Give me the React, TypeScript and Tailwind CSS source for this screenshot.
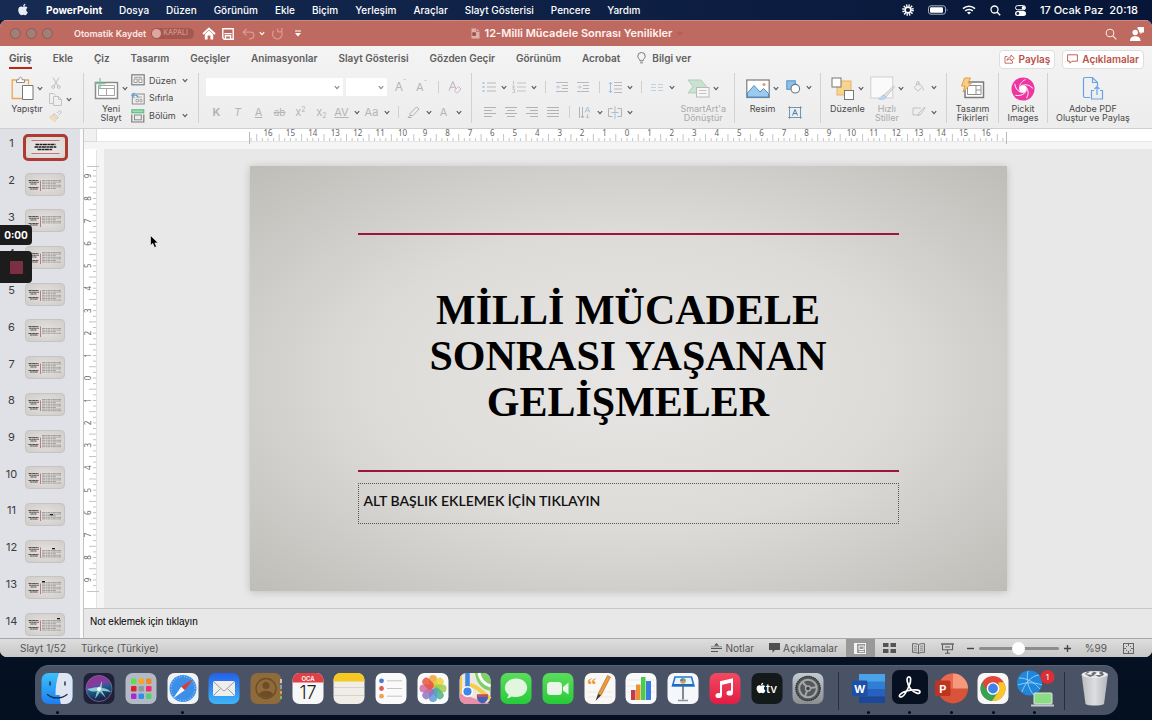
import type { ReactNode } from "react";
import { FaApple } from "react-icons/fa";

const MENUS = ["Dosya", "Düzen", "Görünüm", "Ekle", "Biçim", "Yerleşim", "Araçlar", "Slayt Gösterisi", "Pencere", "Yardım"];
const TABS = ["Giriş", "Ekle", "Çiz", "Tasarım", "Geçişler", "Animasyonlar", "Slayt Gösterisi", "Gözden Geçir", "Görünüm", "Acrobat"];

/* ---------- small helpers ---------- */

function Ico({ w, h, children }: { w: number; h: number; children: ReactNode }) {
  return (
    <svg width={w} height={h} viewBox={`0 0 ${w} ${h}`} fill="none" className="shrink-0" aria-hidden="true">
      {children}
    </svg>
  );
}

function Chevron({ color = "#5a5a5a" }: { color?: string }) {
  return (
    <Ico w={6} h={5}>
      <path d="M.8 1.2 3 3.6 5.2 1.2" stroke={color} strokeWidth="1.2" />
    </Ico>
  );
}

// icon only, 21px slot
function Tool({ label, children }: { label: string; children: ReactNode }) {
  return (
    <button aria-label={label} className="flex h-5 w-[21px] shrink-0 items-center justify-center text-[#b5b5b5]">
      {children}
    </button>
  );
}

// icon with a drop-down arrow
function MenuTool({ label, children }: { label: string; children: ReactNode }) {
  return (
    <button aria-label={label} className="flex h-5 w-[30px] shrink-0 items-center text-[#b5b5b5]">
      <span className="flex w-[19px] justify-center">{children}</span>
      <span className="flex w-[11px] justify-center">
        <Chevron />
      </span>
    </button>
  );
}

function Divider() {
  return (
    <span className="flex w-3 shrink-0 justify-center">
      <span className="h-3 w-px bg-[#cfcfcf]" />
    </span>
  );
}

// tall ribbon button: picture on top, one or two caption lines below
function BigTool({ lines, icon, chevron, dim }: { lines: string[]; icon: ReactNode; chevron?: boolean; dim?: boolean }) {
  return (
    <button className="flex shrink-0 flex-col items-center">
      <span className="flex h-[31px] items-center gap-[3px]">
        {icon}
        {chevron && <Chevron />}
      </span>
      <span className={dim ? "text-center text-[9px] leading-[9px] text-[#a9a9a9]" : "text-center text-[9px] leading-[9px] text-[#4a4a4a]"}>
        {lines.map((l) => (
          <span key={l} className="block whitespace-nowrap">{l}</span>
        ))}
      </span>
    </button>
  );
}

/* ---------- menu bar ---------- */

function MenuBar() {
  return (
    <header className="flex h-5 shrink-0 items-center bg-linear-to-r from-[#162a52] to-[#071638] pr-[14px] pl-[18px] text-[10px] font-medium text-white">
      <button aria-label="Apple" className="mr-[18px]">
        <FaApple size={13} color="#e8ecf5" className="mx-auto -mt-px w-[10px]" />
      </button>
      <nav className="flex gap-[17px] whitespace-nowrap">
        <button className="font-bold">PowerPoint</button>
        {MENUS.map((m) => (
          <button key={m}>{m}</button>
        ))}
      </nav>
      <div className="ml-auto flex items-center gap-[14px]">
        <Ico w={12} h={12}>
          <circle cx="6" cy="6" r="4.6" stroke="#fff" strokeWidth="2.4" strokeDasharray="1.3 1.1" />
          <circle cx="6" cy="6" r="2.9" stroke="#fff" strokeWidth="1.6" />
        </Ico>
        <Ico w={20} h={10}>
          <rect x=".5" y=".8" width="17" height="8.4" rx="2.4" stroke="#aab3c8" />
          <rect x="2" y="2.2" width="13" height="5.6" rx="1.2" fill="#fff" />
          <path d="M18.8 3.6v2.8c.8-.3.8-2.500 0-2.800Z" fill="#aab3c8" />
        </Ico>
        <Ico w={14} h={10}>
          <path d="M1 3.600a8.600 8.600 0 0 1 12 0M3.200 5.900a5.500 5.500 0 0 1 7.600 0" stroke="#fff" strokeWidth="1.500" />
          <path d="m7 9.600-2-2a2.900 2.900 0 0 1 4 0Z" fill="#fff" />
        </Ico>
        <Ico w={11} h={11}>
          <circle cx="4.500" cy="4.500" r="3.500" stroke="#fff" strokeWidth="1.300" />
          <path d="m7 7 3.200 3.200" stroke="#fff" strokeWidth="1.400" />
        </Ico>
        <Ico w={11} h={11}>
          <rect x=".5" y=".6" width="10" height="4.200" rx="2.100" stroke="#fff" />
          <circle cx="8.400" cy="2.700" r="1.700" fill="#fff" />
          <rect x="0" y="6" width="11" height="5" rx="2.500" fill="#fff" />
          <circle cx="2.800" cy="8.500" r="1.400" fill="#14244a" />
        </Ico>
        <span className="flex gap-[6px] text-[11px] whitespace-nowrap">
          <span>17 Ocak Paz</span>
          <span>20:18</span>
        </span>
      </div>
    </header>
  );
}

/* ---------- window title ---------- */

function TitleBar() {
  return (
    <div className="flex h-[26px] shrink-0 items-center border-t border-[#c98a82] bg-[#bf6a60] pr-2 pl-[10px] text-white">
      <div className="flex flex-1 items-center">
        <div className="flex gap-[5px]">
          {["Kapat", "Küçült", "Büyüt"].map((n) => (
            <button key={n} aria-label={n} className="size-[11px] rounded-full border border-[#8f5a53] bg-[#a17f79]" />
          ))}
        </div>
        <label className="ml-[21px] flex items-center gap-[5px] text-[9px] font-semibold whitespace-nowrap text-[#fbe9e6]">
          Otomatik Kaydet
          <span className="relative flex h-[11px] w-[43px] items-center rounded-full bg-[#a4574e] pl-3 text-[7px] font-medium text-[#d29a93]">
            <input type="checkbox" className="absolute top-px left-px size-[9px] appearance-none rounded-full bg-[#dca7a0]" />
            KAPALI
          </span>
        </label>
        <div className="ml-2 flex items-center gap-[6px]">
          <button aria-label="Giriş sayfası">
            <Ico w={14} h={13}>
              <path d="M1 7 7 1.500 13 7" stroke="#fff" strokeWidth="1.700" />
              <path d="M2.800 7.200 7 3.600l4.200 3.600V12.500H8.400V8.600H5.600v3.900H2.800Z" fill="#fff" />
            </Ico>
          </button>
          <button aria-label="Kaydet">
            <Ico w={12} h={12}>
              <path d="M.8.8h10.400v10.400H2.200L.8 9.800Z" stroke="#fff" strokeWidth="1.400" />
              <path d="M2.400 5.600h7.200M3.400 11V7.800h5.200V11" stroke="#fff" strokeWidth="1.400" />
            </Ico>
          </button>
          <button aria-label="Geri al" className="ml-[2px] flex items-center gap-1">
            <Ico w={13} h={12}>
              <path d="M4.600 1 1.200 4.200l3.400 3.200M1.400 4.200h7.200a3.300 3.300 0 0 1 0 6.600H7" stroke="#d99a92" strokeWidth="1.300" />
            </Ico>
            <Chevron color="#fff" />
          </button>
          <button aria-label="Yinele">
            <Ico w={13} h={12}>
              <path d="M2.800 2.800a4.800 4.800 0 1 0 7.400.4M6.600 3.800V.8M6.600 3.800h4.200V0" stroke="#d99a92" strokeWidth="1.300" />
            </Ico>
          </button>
          <button aria-label="Araç çubuğunu özelleştir" className="ml-1">
            <Ico w={8} h={7}>
              <path d="M1 1h6" stroke="#fff" strokeWidth="1.200" />
              <path d="M1 3h6L4 6.400Z" fill="#fff" />
            </Ico>
          </button>
        </div>
      </div>
      <div className="flex items-center gap-[5px] text-[11px] font-semibold whitespace-nowrap text-[#fff3f1]">
        <Ico w={9} h={11}>
          <path d="M.5.5h5.200L8.500 3.300V10.500H.5Z" fill="#d9b0aa" />
          <path d="M5.500.5v3h3" stroke="#a9655d" strokeWidth=".7" />
          <rect x="1.300" y="4.300" width="3.600" height="3.600" fill="#a34c42" />
        </Ico>
        <h1>12-Milli Mücadele Sonrası Yenilikler</h1>
        <Chevron color="#b0584e" />
      </div>
      <div className="flex flex-1 items-center justify-end gap-[13px]">
        <button aria-label="Ara">
          <Ico w={12} h={12}>
            <circle cx="5" cy="5" r="3.800" stroke="#fbe5e2" strokeWidth="1.100" />
            <path d="m7.800 7.800 3.500 3.500" stroke="#fbe5e2" strokeWidth="1.200" />
          </Ico>
        </button>
        <button aria-label="Hesap">
          <Ico w={14} h={14}>
            <path d="M7.500 0h6.500v5.500h-2L10.500 7.500V5.500H9.300A3.500 3.500 0 0 0 7.500 2Z" fill="#fff" />
            <circle cx="5.200" cy="5.500" r="2.700" fill="#fff" />
            <path d="M0 14c0-3.500 2.200-4.700 5.200-4.700s5.300 1.200 5.300 4.700Z" fill="#fff" />
          </Ico>
        </button>
      </div>
    </div>
  );
}

/* ---------- ribbon ---------- */

function TabRow() {
  return (
    <div className="flex h-[24px] shrink-0 items-center pr-2 pl-[9px] text-[10px] font-semibold text-[#606060]">
      <div className="flex gap-[21px] whitespace-nowrap">
        {TABS.map((t, i) => (
          <button key={t} className={i === 0 ? "border-b-2 border-[#b5271b] pt-[2px] leading-[18px] font-bold" : "leading-[18px]"}>
            {t}
          </button>
        ))}
        <button className="-ml-1 flex items-center gap-[6px]">
          <Ico w={9} h={12}>
            <path d="M3 8.800C3 7 .8 6.400.8 4.200a3.700 3.700 0 0 1 7.400 0C8.200 6.400 6 7 6 8.800ZM3.200 10.800h2.600" stroke="#6a6a6a" strokeWidth=".9" />
          </Ico>
          Bilgi ver
        </button>
      </div>
      <div className="mt-[2px] ml-auto flex gap-[7px] font-semibold text-[#bb5147]">
        <button className="flex h-[19px] items-center gap-1 rounded-sm border border-[#e0dedd] bg-white px-1">
          <Ico w={11} h={10}>
            <path d="M3.500 2.500H1v6.700h7.500V7M3 6.500c.4-2.300 1.900-3.500 4-3.500V1l3.300 3L7 7V5C5.200 5 4 5.300 3 6.500Z" stroke="#bb5147" strokeWidth=".8" />
          </Ico>
          Paylaş
        </button>
        <button className="flex h-[19px] items-center gap-1 rounded-sm border border-[#e0dedd] bg-white px-1">
          <Ico w={11} h={10}>
            <path d="M.6.800h9.800v6.400H5L3 9.300V7.200H.6Z" stroke="#bb5147" strokeWidth=".9" />
          </Ico>
          Açıklamalar
        </button>
      </div>
    </div>
  );
}

function ClipboardGroup() {
  return (
    <>
      <BigTool
        lines={["Yapıştır"]}
        chevron
        icon={
          <Ico w={23} h={26}>
            <path d="M5.500 4H1.200v18.500H11" stroke="#e9a850" strokeWidth="1.300" />
            <path d="M13 4h4.500v4.500" stroke="#e9a850" strokeWidth="1.300" />
            <path d="M5.500 3.800h2.200c.4-3.400 3-3.400 3.500 0h2.300v2.700h-8Z" fill="#fff" stroke="#8b8b8b" />
            <path d="M11.500 9.500H22v14H11.500Z" fill="#fff" stroke="#777" />
          </Ico>
        }
      />
      <div className="flex flex-col">
        <Tool label="Kes">
          <Ico w={10} h={12}>
            <path d="M2 .5 7 9M8 .5 3 9" stroke="#bdbdbd" />
            <circle cx="2.200" cy="10" r="1.400" stroke="#bdbdbd" />
            <circle cx="7.800" cy="10" r="1.400" stroke="#bdbdbd" />
          </Ico>
        </Tool>
        <button aria-label="Kopyala" className="flex h-4 items-center gap-1 pl-1">
          <Ico w={13} h={13}>
            <path d="M4.500 10.500H.5V.5h4.200l2 2" stroke="#c3c3c3" />
            <path d="M4.500 3.500h5l3 3v6h-8ZM9.500 3.500v3h3" stroke="#c3c3c3" />
          </Ico>
          <Chevron />
        </button>
        <Tool label="Biçim boyacısı">
          <Ico w={13} h={12}>
            <path d="m8 3 3-2.500 1.500 1.500L10 5" stroke="#c4c4c4" />
            <path d="m5 3.500 4.500 4-1.500 1-4-3.500Z" stroke="#c4c4c4" />
            <path d="M4 5 .8 6.500C2 9 4 11 6 11.500L7.800 8.500Z" fill="#f5dcbd" stroke="#e5cfb4" strokeWidth=".8" />
          </Ico>
        </Tool>
      </div>
    </>
  );
}

function SlidesGroup() {
  return (
    <>
      <BigTool
        lines={["Yeni", "Slayt"]}
        chevron
        icon={
          <Ico w={25} h={24}>
            <rect x="1.500" y="5.500" width="22" height="16" fill="#fff" stroke="#8a8a8a" strokeWidth="1.500" />
            <path d="M4.500 8.500h16v10h-16ZM4.500 11.500h16M12.500 11.500v7" stroke="#a5a5a5" />
            <path d="M6 1v11M.5 6.500h11" stroke="#7cc6a2" strokeWidth="1.300" />
          </Ico>
        }
      />
      <div className="flex flex-col gap-[3px] text-[9px] text-[#4a4a4a]">
        <button className="flex h-[15px] items-center gap-1">
          <Ico w={14} h={12}>
            <rect x=".8" y=".8" width="12.400" height="10" stroke="#7d7d7d" strokeWidth="1.200" />
            <path d="M3 3.300h8M3 5h3.200v3.500H3ZM7.800 5H11v3.500H7.800Z" stroke="#8d8d8d" strokeWidth=".8" />
          </Ico>
          <span className="w-[29px] text-left">Düzen</span>
          <Chevron />
        </button>
        <button className="flex h-[15px] items-center gap-1">
          <Ico w={14} h={13}>
            <rect x="1.300" y="2" width="11.900" height="10" stroke="#8b8b8b" />
            <path d="M5 5h6M5 7.300h2.500v2.500H5ZM9 7.300h2v2.500H9Z" stroke="#9a9a9a" strokeWidth=".8" />
            <path d="M3.600.8.9 3.300l2.700 2.500M1 3.300h4c1.500 0 2 1 2 2.200" stroke="#5c9bd0" strokeWidth="1.100" />
          </Ico>
          Sıfırla
        </button>
        <button className="flex h-[15px] items-center gap-1">
          <Ico w={14} h={14}>
            <rect x=".8" y=".8" width="12" height="3" fill="#9fdcb3" stroke="#53b878" />
            <path d="M.8 5.500v7.500h12V5.500" stroke="#7a7a7a" strokeWidth="1.200" />
            <rect x="3.500" y="6" width="6.800" height="4.800" stroke="#8a8a8a" />
          </Ico>
          <span className="w-[29px] text-left">Bölüm</span>
          <Chevron />
        </button>
      </div>
    </>
  );
}

function FontGroup() {
  return (
    <div className="flex flex-col gap-[5px] pt-1">
      <div className="flex h-5 items-center">
        <div className="relative">
          <select aria-label="Yazı tipi" className="block h-[18px] w-[137px] appearance-none bg-white" />
          <span className="pointer-events-none absolute top-[7px] right-[3px]">
            <Chevron color="#8a8a8a" />
          </span>
        </div>
        <div className="relative ml-[3px]">
          <select aria-label="Yazı tipi boyutu" className="block h-[18px] w-[41px] appearance-none bg-white" />
          <span className="pointer-events-none absolute top-[7px] right-[3px]">
            <Chevron color="#8a8a8a" />
          </span>
        </div>
        <span className="w-[3px]" />
        <Tool label="Büyüt">
          <span className="flex text-[12px]">
            A<span className="text-[8px] leading-[8px]">ˆ</span>
          </span>
        </Tool>
        <Tool label="Küçült">
          <span className="flex text-[11px]">
            A<span className="text-[8px] leading-[8px]">ˇ</span>
          </span>
        </Tool>
        <Divider />
        <Tool label="Biçimlendirmeyi temizle">
          <Ico w={14} h={14}>
            <path d="M1 10.500 4.800 1.500 8 9M2.500 7.300h4" stroke="#b5b5b5" />
            <path d="m6.500 10.500 4-4 2.500 2.500-3.500 3.800H8.300Z" stroke="#d7abd5" />
          </Ico>
        </Tool>
      </div>
      <div className="flex h-5 items-center text-[11px]">
        <Tool label="Kalın"><b>K</b></Tool>
        <Tool label="İtalik"><i>T</i></Tool>
        <Tool label="Altı çizili"><u>A</u></Tool>
        <Tool label="Üstü çizili"><s className="text-[10px]">ab</s></Tool>
        <Tool label="Üst simge"><span>x<sup className="text-[7px]">2</sup></span></Tool>
        <Tool label="Alt simge"><span>x<sub className="text-[7px]">2</sub></span></Tool>
        <MenuTool label="Karakter aralığı"><u className="decoration-1">AV</u></MenuTool>
        <MenuTool label="Büyük küçük harf">Aa</MenuTool>
        <Divider />
        <MenuTool label="Vurgu rengi">
          <Ico w={13} h={12}>
            <path d="M3 7.500 9.500 1l2.500 2-6 6.500H3ZM3 9.500 1 11.500h3.500" stroke="#b0b0b0" />
          </Ico>
        </MenuTool>
        <MenuTool label="Yazı rengi">A</MenuTool>
      </div>
    </div>
  );
}

// rows of text strokes, used by the paragraph tools
function TextLines({ rows }: { rows: [number, number][] }) {
  return (
    <Ico w={12} h={12}>
      {rows.map(([a, b], i) => (
        <path key={i} d={`M${a} ${i * 3 + 1.5}H${b}`} stroke="#b3b3b3" />
      ))}
    </Ico>
  );
}

function ParagraphGroup() {
  return (
    <>
      <div className="flex flex-col gap-[5px] pt-1">
        <div className="flex h-5 items-center">
          <MenuTool label="Madde işaretleri">
            <Ico w={14} h={12}>
              <path d="M5 2h9M5 6h9M5 10h9" stroke="#b9b9b9" />
              <path d="M.5 2h2M.5 6h2M.5 10h2" stroke="#adc9e5" strokeWidth="2" />
            </Ico>
          </MenuTool>
          <MenuTool label="Numaralandırma">
            <Ico w={14} h={12}>
              <path d="M5 2h9M5 6h9M5 10h9" stroke="#c3c3c3" />
              <path d="M1.500 0v3.500M.5 5h2L.5 7h2M.5 8.500h2v3h-2" stroke="#b9b9b9" strokeWidth=".8" />
            </Ico>
          </MenuTool>
          <Divider />
          <Tool label="Girintiyi azalt">
            <Ico w={12} h={12}>
              <path d="M0 1.500h12M6 4.500h6M6 7.500h6M0 10.500h12" stroke="#b9b9b9" />
              <path d="M4.500 6H.8M2.500 4.300.8 6l1.700 1.700" stroke="#adc9e5" />
            </Ico>
          </Tool>
          <Tool label="Girintiyi artır">
            <Ico w={12} h={12}>
              <path d="M0 1.500h12M6 4.500h6M6 7.500h6M0 10.500h12" stroke="#b9b9b9" />
              <path d="M.5 6h3.700M2.500 4.300 4.200 6 2.500 7.700" stroke="#adc9e5" />
            </Ico>
          </Tool>
          <Divider />
          <MenuTool label="Satır aralığı">
            <Ico w={14} h={13}>
              <path d="M6 1.500h8M6 4.500h8M6 8h8M6 11.500h8" stroke="#b9b9b9" />
              <path d="M2.500 1.500v10M.8 3.200l1.700-2 1.700 2M.8 9.800l1.700 2 1.700-2" stroke="#9dc0e2" />
            </Ico>
          </MenuTool>
          <Divider />
          <MenuTool label="Sütunlar">
            <Ico w={12} h={9}>
              <path d="M0 1.500h5M0 4.500h5M0 7.500h5M7 1.500h5M7 4.500h5M7 7.500h5" stroke="#c3d1df" />
            </Ico>
          </MenuTool>
        </div>
        <div className="flex h-5 items-center">
          <Tool label="Sola hizala"><TextLines rows={[[0, 12], [0, 8], [0, 12], [0, 8]]} /></Tool>
          <Tool label="Ortala"><TextLines rows={[[0, 12], [2, 10], [0, 12], [2, 10]]} /></Tool>
          <Tool label="Sağa hizala"><TextLines rows={[[0, 12], [4, 12], [0, 12], [4, 12]]} /></Tool>
          <Tool label="İki yana yasla"><TextLines rows={[[0, 12], [0, 12], [0, 12], [0, 12]]} /></Tool>
          <Divider />
          <MenuTool label="Metin yönü">
            <Ico w={13} h={13}>
              <path d="M1.500 1v11M4.500 1v10.500M3 10l1.500 2L6 10" stroke="#b3b3b3" />
              <path d="M7 6.500 9.500 1 12 6.500M8 4.800h3M9.500 8v4M8 10.500l1.500 1.700 1.500-1.700" stroke="#a9bfd4" strokeWidth=".9" />
            </Ico>
          </MenuTool>
          <MenuTool label="Metni hizala">
            <Ico w={14} h={13}>
              <path d="M4.500 2.500h-4v8h4M9.500 2.500h4v8h-4" stroke="#b3b3b3" />
              <path d="M7 0v13M3.500 6.500h7" stroke="#a9bfd4" />
            </Ico>
          </MenuTool>
        </div>
      </div>
      <BigTool
        lines={["SmartArt'a", "Dönüştür"]}
        chevron
        dim
        icon={
          <Ico w={23} h={20}>
            <path d="M1 1h13l5.500 6.500L14 14H1l5-6.500Z" fill="#c9e3d0" stroke="#acd1b7" />
            <rect x="9.500" y="8.500" width="12.500" height="9.500" fill="#f7f7f7" stroke="#b9b9b9" />
            <path d="M12 11.500h7.500M12 14.500h7.500" stroke="#c4c4c4" />
          </Ico>
        }
      />
    </>
  );
}

function InsertGroup() {
  return (
    <>
      <BigTool
        lines={["Resim"]}
        chevron
        icon={
          <Ico w={24} h={20}>
            <rect x=".8" y="1" width="22.400" height="17.500" fill="#fff" stroke="#7a7a7a" strokeWidth="1.200" />
            <path d="M1.500 14 8 6.500l6 6.500 3.500-3.500 5 5v3.500h-21Z" fill="#9cc9ee" stroke="#4b8fc9" />
            <circle cx="18" cy="5.500" r="1.500" fill="#e8956e" />
          </Ico>
        }
      />
      <div className="flex flex-col gap-[5px] pt-1">
        <MenuTool label="Şekiller">
          <Ico w={15} h={14}>
            <rect x=".8" y=".8" width="8.500" height="8.500" fill="#8fbfe6" stroke="#4f92cb" />
            <circle cx="9.300" cy="8.700" r="4.300" fill="#fff" stroke="#6b7783" strokeWidth="1.100" />
          </Ico>
        </MenuTool>
        <Tool label="Metin kutusu">
          <Ico w={14} h={13}>
            <rect x="1.500" y="1.500" width="11" height="10" stroke="#6c97b7" />
            <path d="M0 1.500h3M1.500 0v3M11 1.500h3M12.500 0v3M0 11.500h3M1.500 10v3M11 11.500h3M12.500 10v3" stroke="#7d8b96" strokeWidth=".7" />
            <path d="M4.500 9.500 7 3.500l2.500 6M5.400 7.500h3.200" stroke="#3f83bd" />
          </Ico>
        </Tool>
      </div>
    </>
  );
}

function ArrangeGroup() {
  return (
    <>
      <BigTool
        lines={["Düzenle"]}
        chevron
        icon={
          <Ico w={24} h={24}>
            <rect x="6" y="4" width="14" height="14" fill="#f8d48f" stroke="#e3b565" />
            <rect x="1" y="1" width="9" height="9" fill="#fff" stroke="#777" />
            <rect x="13.500" y="13.500" width="9" height="9" fill="#fff" stroke="#777" />
          </Ico>
        }
      />
      <BigTool
        lines={["Hızlı", "Stiller"]}
        chevron
        dim
        icon={
          <Ico w={25} h={25}>
            <rect x=".8" y="1" width="22" height="21" fill="#fafafa" stroke="#cfcfcf" />
            <path d="m23.500 10-9.500 9 2 2L24.500 11Z" fill="#e5e5e5" stroke="#bcbcbc" strokeWidth=".8" />
            <path d="M14 19c-2.500 0-3 2.500-5.500 4 3 1 7 .5 7.500-2Z" fill="#bcd6ee" stroke="#a8c5df" strokeWidth=".8" />
          </Ico>
        }
      />
      <div className="flex flex-col gap-[5px] pt-1">
        <MenuTool label="Şekil dolgusu">
          <Ico w={12} h={12}>
            <path d="M5.500 2 1.200 6.500 5 10.200l4.500-4.500ZM3.500 4V1.500C3.800 0 6 0 6 1.500v3" stroke="#bcbcbc" strokeWidth=".9" />
            <path d="M10.200 6.500c1.200 2 1 2.800 0 2.800s-1-1 0-2.800Z" fill="#c9c9c9" />
          </Ico>
        </MenuTool>
        <MenuTool label="Şekil anahattı">
          <Ico w={14} h={12}>
            <path d="M9 2H1v7h3M12.500 1 7 7l-1 2.500L8.500 8.500 13 2Z" stroke="#bcbcbc" strokeWidth=".9" />
            <path d="M4 9h2" stroke="#b7dcc2" strokeWidth="1.500" />
          </Ico>
        </MenuTool>
      </div>
    </>
  );
}

function Ribbon() {
  const group = "flex h-[50px] shrink-0 border-r border-[#d2d2d2]";
  return (
    <div className="flex h-[59px] shrink-0 overflow-hidden border-b border-[#cfcfcf] pt-[3px]">
      <div className={`${group} w-[84px] gap-[2px] pl-[11px]`}><ClipboardGroup /></div>
      <div className={`${group} w-[115px] justify-between pr-[10px] pl-[10px]`}><SlidesGroup /></div>
      <div className={`${group} w-[273px] pl-[7px]`}><FontGroup /></div>
      <div className={`${group} w-[263px] justify-between pr-[8px] pl-[7px]`}><ParagraphGroup /></div>
      <div className={`${group} w-[86px] justify-between pr-[6px] pl-[11px]`}><InsertGroup /></div>
      <div className={`${group} w-[126px] justify-between pr-[7px] pl-[9px]`}><ArrangeGroup /></div>
      <div className={`${group} w-[52px] justify-center`}>
        <BigTool
          lines={["Tasarım", "Fikirleri"]}
          icon={
            <Ico w={25} h={24}>
              <rect x="5" y="5" width="18.500" height="15.500" fill="#fff" stroke="#7a7a7a" strokeWidth="1.500" />
              <path d="M7.500 8.500h13.500v9H7.500ZM16 8.500v9M16 13h5" stroke="#8f8f8f" />
              <path d="M4.500 1h6L8 6h3.500L3 15l2-6H1.500Z" fill="#f8cf8a" stroke="#e59c3f" />
            </Ico>
          }
        />
      </div>
      <div className={`${group} w-[49px] justify-center`}>
        <BigTool
          lines={["Pickit", "Images"]}
          icon={
            <Ico w={24} h={24}>
              <circle cx="12" cy="12" r="11.500" fill="#ee35a0" />
              <circle cx="12" cy="12" r="3.800" fill="#fff" />
              {[0, 72, 144, 216, 288].map((a) => (
                <path key={a} d="M8.400 12.500C8 8.500 10 4.500 14.500 2.500" stroke="#fde4f2" strokeWidth="1" transform={`rotate(${a} 12 12)`} />
              ))}
            </Ico>
          }
        />
      </div>
      <div className="flex shrink-0 pl-[8px]">
        <BigTool
          lines={["Adobe PDF", "Oluştur ve Paylaş"]}
          icon={
            <Ico w={22} h={25}>
              <path d="M8 21.500H3a1.500 1.500 0 0 1-1.500-1.500V3A1.500 1.500 0 0 1 3 1.500h7.500l5 5V10M10.500 1.500v5h5" stroke="#6ba2e6" strokeWidth="1.200" />
              <path d="M12 14.500H9.500v8.500h11v-8.500H18M15 19v-8.500M12.500 13 15 10.500l2.500 2.500" stroke="#6ba2e6" strokeWidth="1.200" />
            </Ico>
          }
        />
      </div>
    </div>
  );
}

/* ---------- slide list ---------- */

type Thumb = { top: number; rows: number; mark?: [number, number] };

const THUMBS: Thumb[] = [
  { top: 0, rows: 0 },
  { top: 7, rows: 6 },
  { top: 7, rows: 5 },
  { top: 6, rows: 7 },
  { top: 7, rows: 7 },
  { top: 9, rows: 4 },
  { top: 6, rows: 7 },
  { top: 6, rows: 8 },
  { top: 5, rows: 8 },
  { top: 7, rows: 7 },
  { top: 9, rows: 5, mark: [25, 11] },
  { top: 10, rows: 5, mark: [27, 8] },
  { top: 6, rows: 7, mark: [17, 5] },
  { top: 7, rows: 7, mark: [32, 5] },
];

function TitleThumb() {
  return (
    <svg viewBox="1 1 38 21" className="block h-full w-full" aria-hidden="true">
      <path d="M6 4.500h28M6 17.500h28" stroke="#c0546c" strokeWidth=".8" />
      <path d="M10 8.500h20M9 11h22M12 13.500h15" stroke="#1c1c1c" strokeWidth="1.700" strokeDasharray="4 .5 2.500 .4" />
    </svg>
  );
}

function TextThumb({ top, rows, mark }: Thumb) {
  return (
    <svg viewBox="1 1 38 21" className="block h-full w-full" aria-hidden="true">
      <path d="M3.500 7.500h10M4 9.300h10M5.500 11h6M3.500 14.500h10M5 16h8" stroke="#555352" strokeWidth="1.100" strokeDasharray="2.500 .3 1.500 .2" />
      <path d="M15.500 7.500V18" stroke="#b04a63" strokeWidth=".7" />
      {Array.from({ length: rows }, (_, i) => (
        <path key={i} d={`M17 ${top + 0.5 + i * 1.6}H${i % 3 === 2 ? 31 : 36}`} stroke="#9a9895" strokeWidth=".9" strokeDasharray="3 .5 1.500 .4" />
      ))}
      {mark && <rect x={mark[0]} y={mark[1]} width="3" height="1.300" fill="#1c1c1c" />}
    </svg>
  );
}

function SlideList() {
  return (
    <aside className="w-[84px] shrink-0 overflow-hidden border-r border-[#c4c4c4] bg-[#fafafa] pr-[3px]">
      <ol className="grid h-[514px] auto-rows-fr bg-[#dfe1e6]">
        {THUMBS.map((t, i) => (
          <li key={i} className="flex items-center">
            <span className="w-[23px] shrink-0 pb-2 text-center text-[11px] leading-[14px] text-[#3c3c40]">{i + 1}</span>
            {i === 0 ? (
              <button aria-label="Slayt 1" className="h-[27px] w-[45px] rounded-[5px] border-[3px] border-[#ae3a34] bg-radial from-[#efedeb] to-[#d8d5d2]">
                <TitleThumb />
              </button>
            ) : (
              <button aria-label={`Slayt ${i + 1}`} className="ml-[2px] h-[23px] w-[40px] rounded-[4px] border border-[#c6c4c2] bg-radial from-[#e6e3e1] to-[#cfccc9]">
                <TextThumb {...t} />
              </button>
            )}
          </li>
        ))}
      </ol>
    </aside>
  );
}

/* ---------- rulers ---------- */

const CM = 22.44;

function ticks(length: number, middle: number) {
  const out: { pos: number; half: boolean; label: number | null }[] = [];
  const max = Math.floor(middle / (CM / 4));
  for (let q = -max; q <= max; q++) {
    const pos = middle + (q * CM) / 4;
    if (pos < 1 || pos > length - 1) continue;
    out.push({ pos, half: Math.abs(q) % 4 === 2, label: q % 4 === 0 ? Math.abs(q / 4) : null });
  }
  return out;
}

function TopRuler() {
  return (
    <div className="flex h-5 shrink-0 border-b-[7px] border-[#f5f5f5] bg-white">
      <span className="w-[13px] shrink-0 border-r border-b border-[#dcdcdc] bg-[#f1f1f1]" />
      <span className="flex flex-1 justify-center border-b border-[#e6e6e6] pl-[7px]">
        <svg width="758" height="15" viewBox="0 0 758 15" className="shrink-0 overflow-visible" aria-hidden="true">
          <path d="M.5 3v12M757.500 3v12" stroke="#b9b9b9" />
          {ticks(758, 378).map((t) => (
            <g key={t.pos}>
              <path d={`M${t.pos} ${t.half ? 5 : 9}V12`} stroke="#b5b5b5" strokeWidth=".8" />
              {t.label !== null && (
                <text x={t.pos} y="7" textAnchor="middle" fontSize="8" fontFamily="Noto Sans, sans-serif" fill="#666">
                  {t.label}
                </text>
              )}
            </g>
          ))}
        </svg>
      </span>
    </div>
  );
}

function SideRuler() {
  return (
    <div className="flex w-5 shrink-0 items-center border-r-[7px] border-[#f5f5f5] bg-white">
      <svg width="13" height="426" viewBox="0 0 13 426" className="overflow-visible" aria-hidden="true">
        <path d="M12.500-16V443" stroke="#e2e2e2" />
        <path d="M3 .5h12M3 425.500h12" stroke="#c4c4c4" />
        {ticks(426, 212).map((t) => (
          <g key={t.pos}>
            <path d={`M${t.half ? 5 : 9} ${t.pos}H12`} stroke="#b5b5b5" strokeWidth=".8" />
            {t.label !== null && (
              <text x="0" y="0" transform={`translate(7 ${t.pos}) rotate(-90)`} textAnchor="middle" fontSize="8" fontFamily="Noto Sans, sans-serif" fill="#666">
                {t.label}
              </text>
            )}
          </g>
        ))}
      </svg>
    </div>
  );
}

/* ---------- editing area ---------- */

function Slide() {
  return (
    <section className="flex aspect-video w-[757px] max-w-full flex-col bg-radial from-[#e8e6e4] via-[#dddbd8] to-[#bfbdb8] px-[108px] pt-[67px] shadow-[0_1px_8px_rgba(0,0,0,0.18)]">
      <div className="flex h-[239px] flex-col justify-center border-y-2 border-[#9c1440]">
        <h2 className="pt-2 text-center font-['Liberation_Serif',serif] text-[42px] leading-[46px] font-bold text-black">
          MİLLİ MÜCADELE
          <br />
          SONRASI YAŞANAN
          <br />
          GELİŞMELER
        </h2>
      </div>
      <p className="mt-[11px] h-[41px] border border-dotted border-[#555] px-[5px] pt-[7px] font-[Lato,sans-serif] text-[14px] leading-[20px] font-semibold text-[#111]">
        ALT BAŞLIK EKLEMEK İÇİN TIKLAYIN
      </p>
    </section>
  );
}

function Editor() {
  return (
    <div className="flex min-w-0 flex-1 flex-col bg-[#e8e8e8]">
      <TopRuler />
      <div className="flex min-h-0 flex-1">
        <SideRuler />
        <div className="flex flex-1 items-center justify-center overflow-hidden">
          <Slide />
        </div>
      </div>
      <textarea
        aria-label="Notlar"
        defaultValue="Not eklemek için tıklayın"
        className="block h-[30px] shrink-0 resize-none border-t border-[#c6c6c6] px-[6px] pt-[6px] font-['Liberation_Sans',sans-serif] text-[10px] leading-[14px] text-black"
      />
    </div>
  );
}

/* ---------- status bar ---------- */

function StatusBar() {
  return (
    <footer className="flex h-[19px] shrink-0 items-stretch border-t border-[#a8a8a8] bg-linear-to-b from-[#dedede] to-[#c6c6c6] pr-[18px] pl-5 text-[10px] text-[#555]">
      <span className="self-center">Slayt 1/52</span>
      <button className="ml-[15px]">Türkçe (Türkiye)</button>
      <div className="ml-auto flex items-stretch">
        <button className="flex items-center gap-[3px]">
          <Ico w={11} h={10}>
            <path d="M0 5.500h11M0 8.500h7" stroke="#555" />
            <path d="M0 3.800h11" stroke="#777" strokeWidth=".8" />
            <path d="M5.500 0 8 2.800H3Z" fill="#555" />
          </Ico>
          Notlar
        </button>
        <button className="mr-[8px] ml-[15px] flex items-center gap-[3px]">
          <Ico w={11} h={10}>
            <path d="M0 0h11v7H6L3.500 9.800V7H0Z" fill="#4f4f4f" />
          </Ico>
          Açıklamalar
        </button>
        <button aria-label="Normal" className="flex w-[29px] items-center justify-center bg-[#999]">
          <Ico w={12} h={11}>
            <rect x=".5" y=".5" width="11" height="10" stroke="#f2f2f2" />
            <path d="M0 0h3v11H0Z" fill="#f2f2f2" />
            <path d="M5 3h5v3.500H5ZM5 8.500h5" stroke="#f2f2f2" />
          </Ico>
        </button>
        <button aria-label="Slayt sıralayıcısı" className="flex w-[29px] items-center justify-center">
          <Ico w={13} h={10}>
            <path d="M0 0h5.500v4H0ZM7.500 0H13v4H7.500ZM0 6h5.500v4H0ZM7.500 6H13v4H7.500Z" fill="#555" />
          </Ico>
        </button>
        <button aria-label="Okuma görünümü" className="flex w-[29px] items-center justify-center">
          <Ico w={13} h={11}>
            <path d="M6.500 1.800C5 .6 3 .6.600.6v8.800c2.400 0 4.400 0 5.900 1.100 1.500-1.100 3.500-1.100 5.900-1.100V.6C10 .6 8 .6 6.500 1.800Zm0 0v8.700" stroke="#666" />
            <path d="M2 3.200h3M2 5.200h3M2 7.200h3M8 3.200h3M8 5.200h3M8 7.200h3" stroke="#777" strokeWidth=".8" />
          </Ico>
        </button>
        <button aria-label="Slayt gösterisi" className="flex w-[29px] items-center justify-center">
          <Ico w={13} h={11}>
            <path d="M0 1h13" stroke="#5d5d5d" strokeWidth="1.400" />
            <path d="M1.500 1.500v5.200h10V1.500M4 4h5M6.500 6.700v3.500M4 10.300h5" stroke="#5d5d5d" strokeWidth="1.100" />
          </Ico>
        </button>
        <button aria-label="Uzaklaştır" className="ml-[5px]">
          <Ico w={7} h={7}><path d="M0 3.500h7" stroke="#444" strokeWidth="1.400" /></Ico>
        </button>
        <input
          type="range"
          aria-label="Yakınlaştırma"
          defaultValue={49}
          className="mx-[5px] w-[80px] appearance-none self-center bg-transparent [&::-webkit-slider-runnable-track]:h-[3px] [&::-webkit-slider-runnable-track]:rounded-full [&::-webkit-slider-runnable-track]:bg-[#8d8d8d] [&::-webkit-slider-thumb]:-mt-[5px] [&::-webkit-slider-thumb]:size-[13px] [&::-webkit-slider-thumb]:appearance-none [&::-webkit-slider-thumb]:rounded-full [&::-webkit-slider-thumb]:bg-white"
        />
        <button aria-label="Yakınlaştır">
          <Ico w={7} h={7}><path d="M0 3.500h7M3.500 0v7" stroke="#444" strokeWidth="1.400" /></Ico>
        </button>
        <button className="ml-[14px]">%99</button>
        <button aria-label="Pencereye sığdır" className="ml-[16px]">
          <Ico w={11} h={11}>
            <rect x=".5" y=".5" width="10" height="10" stroke="#666" />
            <path d="M5.500 1v2M5.500 8v2M1 5.500h2M8 5.500h2M3 3l1 1M8 3 7 4M3 8l1-1M8 8 7 7" stroke="#666" />
          </Ico>
        </button>
      </div>
    </footer>
  );
}

/* ---------- dock ---------- */

function Tile({ fill, children }: { fill: string; children?: ReactNode }) {
  return (
    <>
      <rect x="2.500" y="3" width="31" height="31" rx="7" fill={fill} />
      {children}
    </>
  );
}

const INTER = "Inter, sans-serif";
const PETALS = ["#f2a33a", "#e8d43c", "#9fcb4b", "#4fb08a", "#5b9bd8", "#8f74c4", "#cf6aa5", "#e8533f"];
const PADS = ["#5fe04a", "#f8a524", "#f08a1c", "#d8232c", "#8f9aa0", "#ef2b6b", "#a32bd9", "#2f8df0", "#4fd46a"];

type App = { name: string; running?: boolean; art: ReactNode };

const APPS: App[] = [
  {
    name: "Finder",
    running: true,
    art: (
      <Tile fill="url(#finder)">
        <path d="M20 3h6.500a7 7 0 0 1 7 7v17a7 7 0 0 1-7 7H22c-1-3-1.300-6-1.300-9H16.500c0-8 1-15 3.500-22Z" fill="#dfe6f2" />
        <path d="M11 12v3M26 12v3" stroke="#1b2b45" strokeWidth="1.400" strokeLinecap="round" />
        <path d="M8.500 24.500c5 4.600 14 4.600 19.500 0" stroke="#1b2b45" strokeWidth="1.300" strokeLinecap="round" fill="none" />
      </Tile>
    ),
  },
  {
    name: "Siri",
    art: (
      <Tile fill="#1f2038">
        <circle cx="18" cy="18.500" r="13" fill="url(#siri)" stroke="#7a6f95" strokeWidth=".8" />
        <path d="M6 19c6-1 9-3 12-1 2-4 2-6 3-7 0 3-.5 5 0 7 3 0 6 1 9 4-4-1-7-1-9-1l4 7-6-6-5 7 2-8c-3 1-6 1-10-2Z" fill="#a7f1ec" opacity=".75" />
        <circle cx="18" cy="19" r="2" fill="#fff" />
      </Tile>
    ),
  },
  {
    name: "Launchpad",
    art: (
      <Tile fill="#b4b9c6">
        {PADS.map((c, i) => (
          <rect key={i} x={8 + (i % 3) * 7.5} y={8.5 + Math.floor(i / 3) * 7.5} width="5.500" height="5.500" rx="1.300" fill={c} />
        ))}
      </Tile>
    ),
  },
  {
    name: "Safari",
    running: true,
    art: (
      <Tile fill="#f1f2f4">
        <circle cx="18" cy="18.500" r="13.500" fill="#3b8fe8" />
        <circle cx="18" cy="18.500" r="12" fill="none" stroke="#a8d0f5" strokeWidth="1.500" strokeDasharray=".6 2" />
        <path d="M28 9 19.800 20.300l-3.600-3.600Z" fill="#e0392f" />
        <path d="M8 28.500 16.200 16.700l3.600 3.600Z" fill="#f5f5f5" />
      </Tile>
    ),
  },
  {
    name: "Mail",
    art: (
      <Tile fill="url(#mail)">
        <rect x="7" y="11" width="22" height="15" rx="2" fill="#eeeeec" />
        <path d="m8 12 8.500 8c1 .9 2 .9 3 0l8.500-8M8 25l6.500-6.500M28 25l-6.500-6.500" stroke="#9a9a98" fill="none" />
      </Tile>
    ),
  },
  {
    name: "Kişiler",
    art: (
      <Tile fill="#8f6a3b">
        <path d="M33 9v4" stroke="#c9c9c9" strokeWidth="2" />
        <path d="M33 15v4" stroke="#6fa8c9" strokeWidth="2" />
        <path d="M33 21v3" stroke="#e79a3c" strokeWidth="2" />
        <path d="M33 26v3" stroke="#63c06d" strokeWidth="2" />
        <circle cx="18" cy="18.500" r="10" fill="none" stroke="#6c4d27" strokeWidth="1.300" />
        <circle cx="18" cy="15.500" r="3.600" fill="#6c4d27" />
        <path d="M11 24.500c1.500-5 12.500-5 14 0-3.500 4-10.500 4-14 0Z" fill="#6c4d27" />
      </Tile>
    ),
  },
  {
    name: "Takvim",
    art: (
      <Tile fill="#f7f7f7">
        <path d="M2.500 12.500V10a7 7 0 0 1 7-7h17a7 7 0 0 1 7 7v2.500Z" fill="#df3f47" />
        <text x="18" y="10.500" textAnchor="middle" fontSize="6" fontWeight="600" fill="#fff" fontFamily={INTER}>OCA</text>
        <text x="18" y="29" textAnchor="middle" fontSize="18" fontWeight="300" fill="#222" fontFamily={INTER}>17</text>
      </Tile>
    ),
  },
  {
    name: "Notlar",
    art: (
      <Tile fill="#efede6">
        <path d="M2.500 11.500V10a7 7 0 0 1 7-7h17a7 7 0 0 1 7 7v1.500Z" fill="#f5c822" />
        <path d="M3 17.500h30M3 25.500h30" stroke="#d6d3ca" />
      </Tile>
    ),
  },
  {
    name: "Anımsatıcılar",
    art: (
      <Tile fill="#fafafa">
        <path d="M14 10.800h15M14 18.500h15M14 26.200h15" stroke="#c4c4c4" />
        <circle cx="8.500" cy="10.800" r="2.400" fill="#4c77d8" />
        <circle cx="8.500" cy="18.500" r="2.400" fill="#e05a55" />
        <circle cx="8.500" cy="26.200" r="2.400" fill="#eda257" />
      </Tile>
    ),
  },
  {
    name: "Fotoğraflar",
    art: (
      <Tile fill="#fafafa">
        {PETALS.map((c, i) => (
          <rect key={c} x="14" y="5" width="8" height="13" rx="4" fill={c} opacity=".85" transform={`rotate(${i * 45} 18 18.500)`} />
        ))}
      </Tile>
    ),
  },
  {
    name: "Haritalar",
    art: (
      <Tile fill="#ece8dd">
        <path d="M18 3h8.500a7 7 0 0 1 7 7v11C26 20 19 13 18 3Z" fill="#7fd069" />
        <path d="M22 3c1 6 5 11 11.500 13" stroke="#fff" strokeWidth="3" fill="none" />
        <path d="M2.500 23 33 34H9.500a7 7 0 0 1-7-7Z" fill="#e98ea8" />
        <path d="M13 15c5 1 12 6 20 14" stroke="#f6cd47" strokeWidth="4" fill="none" />
        <path d="M4 6v17" stroke="#f3c850" strokeWidth="2" />
        <path d="M10.500 3v17" stroke="#3f86e6" strokeWidth="4.500" />
        <circle cx="10.500" cy="21.500" r="4.800" fill="#3f86e6" stroke="#fff" strokeWidth="1.500" />
        <path d="M20 24.500h11c1 5-2 8-5.500 9-3.500-1-6.500-4-5.500-9Z" fill="#3c64b8" />
        <path d="M20 24.500h11v2.500H20Z" fill="#d9474b" />
      </Tile>
    ),
  },
  {
    name: "Mesajlar",
    art: (
      <Tile fill="url(#green)">
        <path d="M18 8.500c6.500 0 11.200 4.200 11.200 9.300S24.500 27 18 27c-1.500 0-3-.2-4.200-.6-1.300 1-3 1.800-5 1.800 1-1 1.700-2.300 1.800-3.600-2.300-1.700-3.800-4-3.800-6.800 0-5.100 4.700-9.300 11.200-9.300Z" fill="#e2f6df" />
      </Tile>
    ),
  },
  {
    name: "FaceTime",
    art: (
      <Tile fill="url(#green)">
        <rect x="7" y="12" width="15" height="13" rx="3.500" fill="#e9f6e7" />
        <path d="m23 17 5.500-4.500v12L23 20.500Z" fill="#e9f6e7" />
      </Tile>
    ),
  },
  {
    name: "Pages",
    art: (
      <Tile fill="#faf8f4">
        <path d="M6 22h24M6 27h24" stroke="#e6e2da" strokeWidth=".7" />
        <text x="5" y="21" fontSize="19" fontWeight="700" fill="#e99a3e" fontFamily="Liberation Serif, serif">“</text>
        <path d="m25.500 5.500 3 1.500-9.500 18.500-3-1.500Z" fill="#ec9a3c" stroke="#a5662a" strokeWidth=".6" />
        <path d="m16 24 3 1.500L13.500 31Z" fill="#38383a" />
      </Tile>
    ),
  },
  {
    name: "Numbers",
    art: (
      <Tile fill="#fafafa">
        <path d="M4 10h28M4 16h28M4 22h28" stroke="#e3e3e3" strokeWidth=".7" />
        <rect x="8" y="20" width="4.500" height="10" fill="#c33b45" />
        <rect x="13" y="14.500" width="4.500" height="15.500" fill="#ee9132" />
        <rect x="18" y="7" width="4.500" height="23" fill="#49cc4b" />
        <rect x="23" y="11" width="5" height="19" fill="#3a7be0" />
      </Tile>
    ),
  },
  {
    name: "Keynote",
    art: (
      <Tile fill="#f5f7fa">
        <path d="M10 7h16.500l2.500 9H7.500Z" fill="#e9f3fb" stroke="#2679d0" strokeWidth="1.600" />
        <path d="M7.500 15h21" stroke="#2368b8" strokeWidth="2" />
        <circle cx="18" cy="11" r="2.800" fill="#f0933a" />
        <path d="M18 8.200a2.800 2.800 0 0 1 2.800 2.800H18Z" fill="#4bbf62" />
        <path d="M18 8.200a2.800 2.800 0 0 0-2.800 2.800H18Z" fill="#3f86e6" />
        <path d="M18 16v13.500" stroke="#5a6470" strokeWidth="1.500" />
        <path d="M13 30.500h10" stroke="#8b939c" strokeWidth="1.500" />
      </Tile>
    ),
  },
  {
    name: "Müzik",
    art: (
      <Tile fill="url(#music)">
        <path d="M14 25V12l11-2.500v13" stroke="#fff" strokeWidth="2" fill="none" />
        <path d="M14 11.500 25 9v3.500L14 15Z" fill="#fff" />
        <ellipse cx="11.700" cy="25.500" rx="3.200" ry="2.600" fill="#fff" />
        <ellipse cx="22.700" cy="23" rx="3.200" ry="2.600" fill="#fff" />
      </Tile>
    ),
  },
  {
    name: "TV",
    art: (
      <Tile fill="#14191a">
        <g transform="translate(6 12)">
          <FaApple size={12} color="#fff" />
        </g>
        <text x="17" y="23" fontSize="12" fontWeight="500" fill="#fff" fontFamily={INTER}>tv</text>
      </Tile>
    ),
  },
  {
    name: "Sistem Tercihleri",
    art: (
      <Tile fill="url(#gear)">
        <circle cx="18" cy="18.500" r="12.500" fill="#55585b" />
        <circle cx="18" cy="18.500" r="12" fill="none" stroke="#2f3234" strokeWidth="1.500" strokeDasharray="1.200 .9" />
        <circle cx="18" cy="18.500" r="8.800" fill="none" stroke="#a4a7aa" strokeWidth="2" />
        <path d="m18 18.500 8.500-1.500M18 18.500l-5.500-6.500M18 18.500l-3 8" stroke="#a4a7aa" strokeWidth="2" />
        <circle cx="18" cy="18.500" r="2.500" fill="#3e4143" stroke="#a4a7aa" strokeWidth="1.400" />
      </Tile>
    ),
  },
];

const OPEN_APPS: App[] = [
  {
    name: "Word",
    running: true,
    art: (
      <>
        <path d="M9 4h26v8H9Z" fill="#4aa3e8" />
        <path d="M9 11.500h26V19H9Z" fill="#2f7dd4" />
        <path d="M9 19h26v7.500H9Z" fill="#2561bd" />
        <path d="M9 26.500h26V33H9Z" fill="#1c489b" />
        <rect x="2" y="10.500" width="15.500" height="15.500" rx="1.500" fill="#1d4fa8" />
        <text x="9.700" y="22.500" textAnchor="middle" fontSize="11" fontWeight="700" fill="#fff" fontFamily={INTER}>W</text>
      </>
    ),
  },
  {
    name: "Acrobat",
    running: true,
    art: (
      <>
        <rect x="0" y="0" width="36" height="34" rx="7" fill="#061021" />
        <path
          d="M16.500 7c2.500-.5 3 3.500.5 9-2.500 6-5.800 11.500-8.500 11-2.800-.6-.3-4.200 6-6 6.500-1.800 13.500-1.600 13.500.8 0 3-5.500 1.600-9.500-3C15 14.500 14 7.500 16.500 7Z"
          stroke="#fff"
          strokeWidth="1.700"
          fill="none"
        />
      </>
    ),
  },
  {
    name: "PowerPoint",
    running: true,
    art: (
      <>
        <circle cx="20" cy="18.500" r="15" fill="#d9533a" />
        <path d="M20 3.500a15 15 0 0 1 15 15H20Z" fill="#f5987c" />
        <path d="M5 18.500a15 15 0 0 1 15-15v15Z" fill="#e9694e" />
        <rect x="2" y="10.500" width="15.500" height="15.500" rx="1.500" fill="#bd3420" />
        <text x="9.700" y="22.500" textAnchor="middle" fontSize="11" fontWeight="700" fill="#fff" fontFamily={INTER}>P</text>
      </>
    ),
  },
  {
    name: "Chrome",
    running: true,
    art: (
      <Tile fill="#f7f7f7">
        <circle cx="18" cy="18.500" r="12.500" fill="#e0463a" />
        <path d="M7.200 12.200A12.500 12.500 0 0 0 17.500 31L23.500 21.500 12.500 21.500Z" fill="#35a354" />
        <path d="M28.800 12.250A12.500 12.500 0 0 1 17 31l6.500-9.500V12.250Z" fill="#f6c62f" />
        <circle cx="18" cy="18.500" r="6.300" fill="#fff" />
        <circle cx="18" cy="18.500" r="4.900" fill="#4180e8" />
      </Tile>
    ),
  },
  {
    name: "Ağ",
    running: true,
    art: (
      <>
        <circle cx="12.500" cy="13" r="12.500" fill="#2086dc" />
        <path d="M2 8c8 0 15 4 21 11M5 22C8 13 14 6 22 5M1 15c8-3 16-3 24 0M11 1c-2 8 0 18 6 24" stroke="#a6dcfb" strokeWidth=".8" fill="none" />
        <rect x="17" y="23" width="18" height="11" rx="1" fill="#8bdc84" stroke="#dfe6e4" />
        <path d="M14 35.500h23" stroke="#c5ccca" strokeWidth="2" />
        <circle cx="30.500" cy="7" r="7" fill="#d92f37" />
        <text x="30.500" y="10" textAnchor="middle" fontSize="8" fill="#fff" fontFamily={INTER}>1</text>
      </>
    ),
  },
];

function DockItem({ app }: { app: App }) {
  return (
    <button aria-label={app.name} className="flex min-w-0 flex-1 flex-col items-center pt-1">
      <svg width="36" height="36" viewBox="0 0 36 36" className="shrink-0 overflow-visible" aria-hidden="true">
        {app.art}
      </svg>
      {app.running && <span className="mt-[5px] size-[3px] rounded-full bg-[#05080d]" />}
    </button>
  );
}

function DockDivider() {
  return (
    <span className="flex w-[18px] shrink-0 items-center justify-center">
      <span className="h-[38px] w-px bg-[#272f3e]" />
    </span>
  );
}

function Dock() {
  return (
    <nav aria-label="Dock" className="mx-auto mt-2 mb-[5px] flex h-[50px] w-[1083px] max-w-full shrink-0 rounded-[14px] border-t border-[#596273] bg-[#4a5366] px-[2px]">
      <svg width="0" height="0" className="absolute" aria-hidden="true">
        <defs>
          <linearGradient id="finder" x2="0" y2="1"><stop stopColor="#3cc0fa" /><stop offset="1" stopColor="#1c7ff0" /></linearGradient>
          <linearGradient id="mail" x2="0" y2="1"><stop stopColor="#2460e8" /><stop offset="1" stopColor="#3fb5f8" /></linearGradient>
          <linearGradient id="green" x2="0" y2="1"><stop stopColor="#5bdc5c" /><stop offset="1" stopColor="#26cb39" /></linearGradient>
          <linearGradient id="music" x2="0" y2="1"><stop stopColor="#f24a60" /><stop offset="1" stopColor="#e21c45" /></linearGradient>
          <linearGradient id="gear" x2="0" y2="1"><stop stopColor="#c3cbd1" /><stop offset="1" stopColor="#8b8d8f" /></linearGradient>
          <linearGradient id="siri" x2=".3" y2="1"><stop stopColor="#9c2f8e" /><stop offset=".45" stopColor="#7c3fa0" /><stop offset=".6" stopColor="#1d5f8f" /><stop offset="1" stopColor="#1a2146" /></linearGradient>
          <linearGradient id="bin" x2="1" y2="0"><stop stopColor="#b9bcc0" /><stop offset=".5" stopColor="#dcdee0" /><stop offset="1" stopColor="#b1b4b9" /></linearGradient>
        </defs>
      </svg>
      {APPS.map((a) => (
        <DockItem key={a.name} app={a} />
      ))}
      <DockDivider />
      {OPEN_APPS.map((a) => (
        <DockItem key={a.name} app={a} />
      ))}
      <DockDivider />
      <DockItem
        app={{
          name: "Çöp Sepeti",
          art: (
            <>
              <path d="M4.500 4h26.500L27 34c-3 2-15.500 2-18.500 0Z" fill="url(#bin)" />
              <ellipse cx="17.800" cy="4.500" rx="13" ry="3.500" fill="#e8e9ea" />
              <path d="M8 4l3-3 3 3 3-2.500 4 2L25 1l2 4-5 2-4-2-5 2Z" fill="#6b6f74" />
              <path d="m9 4 4-2 2 3ZM17 5l4-3 3 3Z" fill="#f7f7f7" />
            </>
          ),
        }}
      />
    </nav>
  );
}

/* ---------- things floating above the window ---------- */

function Recorder() {
  return (
    <div className="absolute top-[225px] left-0 flex w-8 flex-col gap-[6px]">
      <span className="rounded-r-[4px] bg-[#1c1c1d] text-center text-[10px] leading-[20px] font-bold text-white">0:00</span>
      <button aria-label="Kaydı durdur" className="flex h-8 items-center justify-center rounded-r-[4px] bg-[#1c1c1d]">
        <span className="size-[13px] rounded-[1px] bg-[#7b2f45]" />
      </button>
    </div>
  );
}

function Pointer() {
  return (
    <svg width="9" height="14" viewBox="0 0 9 14" className="absolute top-[235px] left-[150px]" aria-hidden="true">
      <path d="M.5.5v10l2.300-2.100L4.500 12.500l2-.9L4.900 7.900h3.300Z" fill="#000" stroke="#fff" strokeWidth=".6" />
    </svg>
  );
}

export default function App() {
  return (
    <div className="relative flex h-screen flex-col overflow-hidden bg-linear-to-b from-[#0b1b40] to-[#04101f] font-[Inter,sans-serif]">
      <MenuBar />
      <main className="flex min-h-0 flex-1 flex-col overflow-hidden rounded-[7px] bg-linear-to-b from-[#f7f6f6] via-[#ebebeb] via-20% to-[#ebebeb]">
        <TitleBar />
        <TabRow />
        <Ribbon />
        <div className="flex min-h-0 flex-1">
          <SlideList />
          <Editor />
        </div>
        <StatusBar />
      </main>
      <Dock />
      <Recorder />
      <Pointer />
    </div>
  );
}
